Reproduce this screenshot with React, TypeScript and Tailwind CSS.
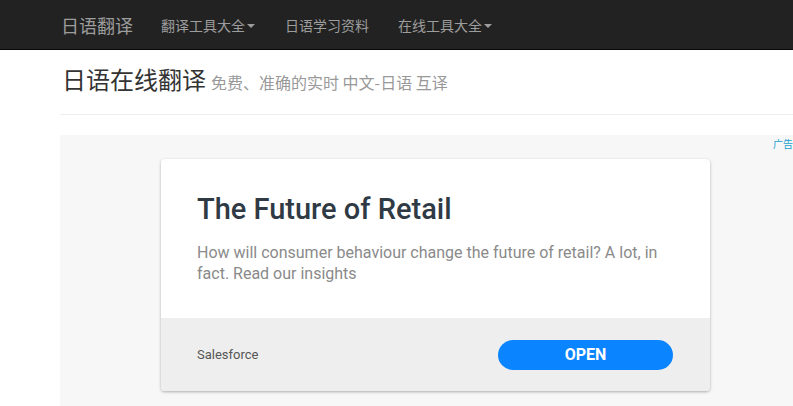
export default function App() {
  const cjk = { fontFamily: '"Noto Sans CJK SC", "Liberation Sans", sans-serif' };
  return (
    <div className="w-[793px] h-[406px] overflow-hidden bg-white" style={cjk}>
      <nav className="h-[50px] bg-[#222222] border-b border-[#080808]">
        <div className="flex items-center h-full pl-[61px]">
          <span className="text-[18px] text-[#9d9d9d] leading-none">日语翻译</span>
          <ul className="flex items-center ml-[13px] text-[14px] text-[#9d9d9d] leading-none">
            <li className="flex items-center px-[15px]">
              翻译工具大全
              <span className="ml-[2px] mt-[2px] w-0 h-0 border-x-[4px] border-x-transparent border-t-[4px] border-t-[#9d9d9d]" />
            </li>
            <li className="pl-[15px] pr-[14px]">日语学习资料</li>
            <li className="flex items-center px-[15px]">
              在线工具大全
              <span className="ml-[2px] mt-[2px] w-0 h-0 border-x-[4px] border-x-transparent border-t-[4px] border-t-[#9d9d9d]" />
            </li>
          </ul>
        </div>
      </nav>
      <div className="ml-[60px]">
        <div className="pt-[16px] pb-[19px] border-b border-[#eeeeee] pl-[2px]">
          <h1 className="text-[24px] leading-[26px] text-[#333333]">
            日语在线翻译
            <small className="ml-[5px] text-[16px] text-[#999999]">免费、准确的实时 中文-日语 互译</small>
          </h1>
        </div>
        <div className="mt-[20px] bg-[#f7f7f7] h-[300px] relative pt-[24px]">
          <span className="absolute right-0 top-[2px] text-[10px] leading-[14px] text-[#1ba1cf]">广告</span>
          <div
            className="ml-[101px] w-[549px] rounded-[4px] bg-white shadow-[0_1px_3px_rgba(0,0,0,0.3)] overflow-hidden"
            style={{ fontFamily: 'Roboto, "Liberation Sans", sans-serif' }}
          >
            <div className="h-[159px] px-[36px] pt-[33px]">
              <h2 className="text-[29px] leading-[34px] font-medium text-[#2f3a45]">The Future of Retail</h2>
              <p className="mt-[16px] text-[16px] leading-[21px] text-[#8a8a8a]">
                How will consumer behaviour change the future of retail? A lot, in fact. Read our insights
              </p>
            </div>
            <div className="h-[73px] bg-[#eeeeee] flex items-center justify-between pl-[36px] pr-[37px]">
              <span className="text-[13px] text-[#555555]">Salesforce</span>
              <button type="button" className="w-[175px] h-[30px] rounded-full bg-[#0a84ff] text-white text-[16px] font-bold">
                OPEN
              </button>
            </div>
          </div>
        </div>
      </div>
    </div>
  );
}
